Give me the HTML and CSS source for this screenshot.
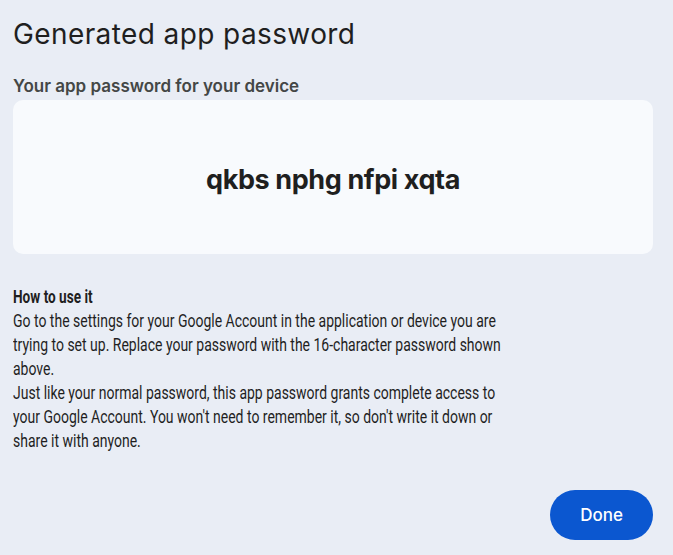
FILE: index.html
```html
<!DOCTYPE html>
<html>
<head>
<meta charset="utf-8">
<link rel="stylesheet" href="styles.css">
</head>
<body>
<div class="dialog">
  <h1 class="title">Generated app password</h1>
  <div class="label">Your app password for your device</div>
  <div class="card"><span class="pw">qkbs nphg nfpi xqta</span></div>
  <div class="howto">
    <div class="howto-title">How to use it</div>
    <p class="text">Go to the settings for your Google Account in the application or device you are trying to set up. Replace your password with the 16-character password shown above.</p>
    <p class="text">Just like your normal password, this app password grants complete access to your Google Account. You won't need to remember it, so don't write it down or share it with anyone.</p>
  </div>
  <div class="actions"><button class="done">Done</button></div>
</div>
</body>
</html>
```
FILE: styles.css
```css
html, body {
  margin: 0;
  padding: 0;
  background: #e9edf5;
}
body {
  width: 673px;
  height: 555px;
  overflow: hidden;
  font-family: Roboto, "Liberation Sans", sans-serif;
  color: #1f1f1f;
}
.dialog {
  padding: 14px 20px 0 13px;
  display: flex;
  flex-direction: column;
}
.title {
  margin: 0;
  font-family: Inter, "Open Sans", sans-serif;
  font-weight: 400;
  font-size: 28px;
  line-height: 40px;
  letter-spacing: 0.4px;
  color: #1f1f1f;
}
.label {
  margin-top: 22px;
  font-family: Inter, "Open Sans", sans-serif;
  font-size: 17px;
  font-weight: 600;
  line-height: 20px;
  color: #444746;
}
.card {
  margin-top: 4px;
  height: 154px;
  background: #f8fafd;
  border-radius: 10px;
  display: flex;
  align-items: center;
  justify-content: center;
}
.pw {
  font-family: Inter, "Open Sans", sans-serif;
  font-size: 27px;
  font-weight: 700;
  letter-spacing: -0.4px;
  padding-top: 4px;
  color: #1f1f1f;
}
.howto {
  margin-top: 32px;
  width: 632px;
  transform: scaleX(0.777);
  transform-origin: left top;
}
.howto-title {
  font-size: 17.5px;
  font-weight: 700;
  line-height: 23px;
  color: #1f1f1f;
}
.text {
  margin: 0;
  font-size: 18px;
  line-height: 24px;
  color: #1f1f1f;
}
.actions {
  display: flex;
  justify-content: flex-end;
  margin-top: 37px;
}
.done {
  width: 103px;
  height: 50px;
  border: none;
  border-radius: 25px;
  background: #0b57d0;
  color: #fff;
  font-family: Inter, Roboto, sans-serif;
  font-size: 17px;
  font-weight: 500;
}
```
